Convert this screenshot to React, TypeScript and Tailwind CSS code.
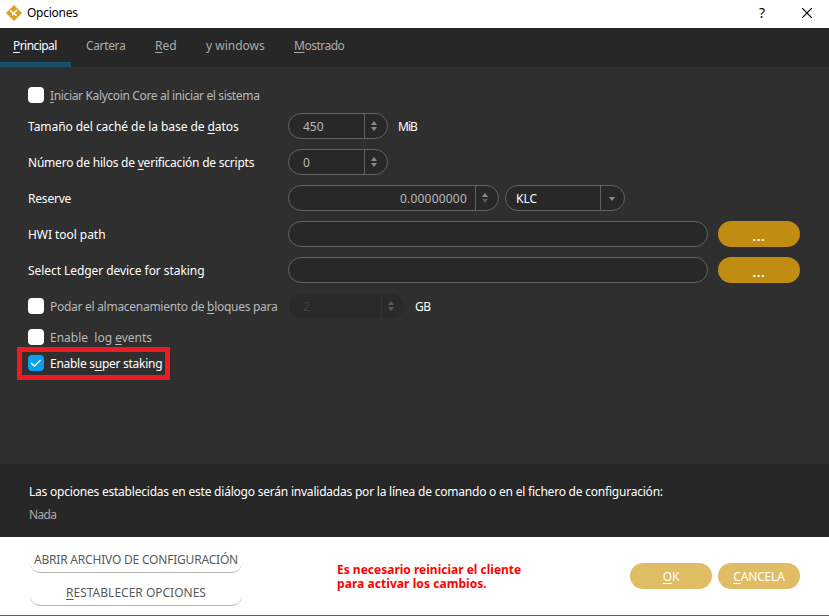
import React from "react";

function Key({ children }: { children: string }) {
  return (
    <span className="underline decoration-1 underline-offset-2 [text-decoration-skip-ink:none]">
      {children}
    </span>
  );
}

function Check({ checked = false }: { checked?: boolean }) {
  return (
    <span
      className={
        "flex size-4 shrink-0 items-center justify-center rounded-[4px] " +
        (checked ? "bg-[#06a0ee]" : "bg-white")
      }
    >
      {checked && (
        <svg width="16" height="16" viewBox="0 0 16 16" fill="none">
          <path d="M3 8l3.4 3.2L12.5 5" stroke="#fff" strokeWidth="1.4" />
        </svg>
      )}
    </span>
  );
}

function Arrows({ up = "#8c8c8c", down = "#8c8c8c" }: { up?: string; down?: string }) {
  return (
    <svg width="6" height="10" viewBox="0 0 6 10">
      <path d="M3 0L6 4H0z" fill={up} />
      <path d="M3 10L0 6h6z" fill={down} />
    </svg>
  );
}

const field = "flex h-[26px] shrink-0 rounded-[13px] border border-[#626262] bg-[#282828] ";
const row = "flex h-[26px] items-center mb-[10px]";
const label = "w-[260px] shrink-0 whitespace-nowrap pt-[2px] ";
const more =
  "ml-[10px] flex h-[26px] w-[82px] items-center justify-center rounded-[13px] bg-[#c08c12] pt-[3px] text-[13px] font-bold tracking-[0.6px]";

export default function App() {
  return (
    <div className="flex h-[616px] w-[829px] flex-col overflow-hidden bg-white font-['Noto_Sans','Open_Sans',sans-serif] text-[12px] leading-4 text-white">
      <header className="flex h-7 shrink-0 items-center pb-[3px] pl-[6px] text-black">
        <svg width="16" height="16" viewBox="0 0 16 16">
          <path d="M8 .5L15.5 8 8 15.5.5 8z" fill="#dda11b" stroke="#dda11b" strokeLinejoin="round" />
          <path d="M4 5.2l2.6 2.6v2.7M11 5.2L7.6 8l3 2.6" stroke="#fff" strokeWidth="1.5" fill="none" />
        </svg>
        <span className="ml-[5px] flex-1 tracking-[-0.25px]">Opciones</span>
        <span className="w-[7px] text-[14px]">?</span>
        <svg className="ml-[36px] mr-[17px]" width="10" height="10" viewBox="0 0 10 10">
          <path d="M0 0l10 10M10 0L0 10" stroke="#000" strokeWidth="1.2" />
        </svg>
      </header>

      <nav className="flex h-[39px] shrink-0 bg-[#272727] text-[#ababab]">
        <div className="h-[39px] w-[71px] border-b-[5px] border-[#195069] pl-[13px] pt-[10px] tracking-[-0.55px] text-white">
          <Key>P</Key>rincipal
        </div>
        <div className="w-[69px] pl-[15px] pt-[10px] tracking-[-0.35px]">Cartera</div>
        <div className="w-[51px] pl-[15px] pt-[10px]"><Key>R</Key>ed</div>
        <div className="w-[88px] whitespace-nowrap pl-[15px] pt-[10px]">y windows</div>
        <div className="pl-[15px] pt-[10px] tracking-[-0.5px]"><Key>M</Key>ostrado</div>
      </nav>

      <main className="h-[397px] shrink-0 bg-[#2f2f2f] pl-7 pt-5">
        <div className="mb-[10px] flex h-4 gap-[6px] text-[#b8b8b8]">
          <Check />
          <span className="pt-px tracking-[-0.35px]"><Key>I</Key>niciar Kalycoin Core al iniciar el sistema</span>
        </div>
        <div className={row}>
          <span className={label + "tracking-[-0.06px]"}>Tamaño del caché de la base de <Key>d</Key>atos</span>
          <div className={field + "w-[100px]"}>
            <span className="w-[76px] border-r border-[#626262] pl-[14px] pt-[5px] text-[#b8b8b8]">450</span>
            <span className="flex flex-1 items-center pl-[6px]"><Arrows /></span>
          </div>
          <span className="ml-[10px] pt-[2px] tracking-[-1px]">MiB</span>
        </div>
        <div className={row}>
          <span className={label + "tracking-[-0.22px]"}>Número de hilos de <Key>v</Key>erificación de scripts</span>
          <div className={field + "w-[100px]"}>
            <span className="w-[76px] border-r border-[#626262] pl-[14px] pt-[5px] text-[#b8b8b8]">0</span>
            <span className="flex flex-1 items-center pl-[6px]"><Arrows /></span>
          </div>
        </div>
        <div className={row}>
          <span className={label + "tracking-[-0.2px]"}>Reserve</span>
          <div className={field + "w-[211px]"}>
            <span className="w-[187px] border-r border-[#626262] pr-2 pt-[5px] text-right tracking-[0.2px] text-[#b8b8b8]">0.00000000</span>
            <span className="flex flex-1 items-center pl-[6px]"><Arrows down="#5a5a5a" /></span>
          </div>
          <div className={field + "ml-[6px] w-[120px]"}>
            <span className="w-[95px] border-r border-[#626262] pl-[10px] pt-[5px]">KLC</span>
            <span className="flex flex-1 items-center pl-[8px] pt-[2px]">
              <svg width="6" height="4" viewBox="0 0 6 4"><path d="M0 0h6L3 4z" fill="#8c8c8c" /></svg>
            </span>
          </div>
        </div>
        <div className={row}>
          <span className={label + "tracking-[-0.05px]"}>HWI tool path</span>
          <div className={field + "w-[420px]"} />
          <button className={more}>...</button>
        </div>
        <div className={row}>
          <span className={label + "tracking-[-0.06px]"}>Select Ledger device for staking</span>
          <div className={field + "w-[420px]"} />
          <button className={more}>...</button>
        </div>
        <div className="flex h-[26px] items-center">
          <div className="flex h-4 w-[260px] shrink-0 gap-[6px] whitespace-nowrap text-[#b8b8b8]">
            <Check />
            <span className="pt-px tracking-[-0.28px]">Podar el almacenamiento de <Key>b</Key>loques para</span>
          </div>
          <div className="ml-px flex h-6 w-[115px] rounded-xl bg-[#2a2a2a]">
            <span className="w-[93px] border-r border-[#333] pl-[14px] pt-[5px] text-[#414141]">2</span>
            <span className="flex flex-1 items-center pl-[6px]"><Arrows up="#595959" down="#595959" /></span>
          </div>
          <span className="ml-[11px] pt-[2px] tracking-[-0.5px]">GB</span>
        </div>
        <div className="mt-[10px] flex h-4 gap-[6px] text-[#b8b8b8]">
          <Check />
          <span className="whitespace-pre pt-px">Enable  log <Key>e</Key>vents</span>
        </div>
        <div className="-ml-[11px] mt-[2px] flex h-[33px] w-[153px] gap-[6px] whitespace-nowrap border-[5px] border-[#ed1c24] pl-[6px] pt-[3px]">
          <Check checked />
          <span className="pt-px tracking-[-0.27px]">Enable s<Key>u</Key>per staking</span>
        </div>
      </main>

      <section className="h-[73px] shrink-0 bg-[#272727] pl-[29px] pt-[20px]">
        <p className="tracking-[-0.215px]">Las opciones establecidas en este diálogo serán invalidadas por la línea de comando o en el fichero de configuración:</p>
        <p className="mt-[7px] tracking-[-0.7px] text-[#ababab]">Nada</p>
      </section>

      <footer className="flex h-[79px] shrink-0 border-b border-[#606060]">
        <div className="ml-[30px] w-[212px] pt-[9px] text-[#5a5a5a]">
          <button className="flex h-[27px] w-full justify-center whitespace-nowrap rounded-b-[10px] border-b border-[#b5b5b5] pt-[6px] tracking-[-0.2px]">
            ABRIR ARCHIVO DE CONFIGURACIÓN
          </button>
          <button className="mt-[6px] flex h-[27px] w-full justify-center whitespace-nowrap rounded-b-[10px] border-b border-[#b5b5b5] pt-[6px]">
            <Key>R</Key>ESTABLECER OPCIONES
          </button>
        </div>
        <p className="ml-[95px] w-[293px] pt-[26px] font-bold leading-[14px] text-[#ff0000]">
          Es necesario reiniciar el cliente<br />
          <span className="tracking-[0.06px]">para activar los cambios.</span>
        </p>
        <div className="mt-[26px] flex h-[26px] gap-[6px]">
          <button className="w-[82px] rounded-[13px] bg-[#e0bd64] pt-[2px] tracking-[-0.2px]"><Key>O</Key>K</button>
          <button className="w-[82px] rounded-[13px] bg-[#e0bd64] pt-[2px] tracking-[-0.15px]"><Key>C</Key>ANCELA</button>
        </div>
      </footer>
    </div>
  );
}
